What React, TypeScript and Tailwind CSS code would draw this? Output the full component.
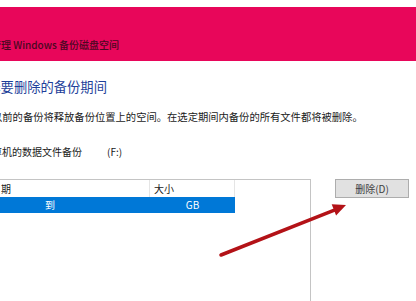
import React from 'react';

export default function App() {
  return (
    <div
      className="relative w-[416px] h-[301px] overflow-hidden bg-white text-[#1a1a1a]"
      style={{ fontFamily: '"Noto Sans CJK SC", "Noto Sans", sans-serif' }}
    >
      {/* Top strip */}
      <div className="h-[7px] bg-white" />

      {/* Pink title bar */}
      <div className="h-[54px] bg-[#e8065a] pt-[31px]">
        <p className="-ml-[9px] whitespace-nowrap text-[10px] font-medium leading-[14px] text-[#4a0822]">管理 Windows 备份磁盘空间</p>
      </div>

      {/* Heading */}
      <h2 className="mt-[17px] -ml-[26px] whitespace-nowrap text-[13.3px] leading-[18px] text-[#1e3f9a]">选择要删除的备份期间</h2>

      {/* Description */}
      <p className="mt-[14px] -ml-[8px] whitespace-nowrap text-[10.3px] leading-[14px]">
        以前的备份将释放备份位置上的空间。在选定期间内备份的所有文件都将被删除。
      </p>

      {/* Backup name */}
      <div className="mt-[21px] flex whitespace-nowrap text-[10px] leading-[14px]">
        <span className="-ml-[18px] w-[125px]">计算机的数据文件备份</span>
        <span>(F:)</span>
      </div>

      {/* Table and button */}
      <div className="mt-[20px] flex items-start">
        <div className="-ml-[10px] h-[130px] w-[321px] border border-[#c4c4c4] bg-white">
          <div className="flex h-[17px] text-[10px] leading-[17px]">
            <div className="w-[159px] border-r border-[#e5e5e5] whitespace-nowrap">日期</div>
            <div className="w-[85px] border-r border-[#e5e5e5] pl-[4px]">大小</div>
          </div>
          <div className="flex h-[16px] w-[244px] bg-[#0078d7] text-[10px] leading-[16px] text-white">
            <div className="w-[159px] pl-[54px]">到</div>
            <div className="w-[85px] text-center">GB</div>
          </div>
        </div>
        <button className="ml-[24px] h-[19px] w-[74px] border border-[#adadad] bg-[#e1e1e1] text-[10px] leading-[17px] text-[#404040]">
          删除(D)
        </button>
      </div>

      {/* Red annotation arrow */}
      <svg className="pointer-events-none absolute left-0 top-0" width="416" height="301" viewBox="0 0 416 301">
        <line x1="221" y1="255" x2="335" y2="209.8" stroke="#b31217" strokeWidth="3.5" strokeLinecap="round" />
        <polygon points="346,205 336.1,215.4 331.7,204.2" fill="#b31217" />
      </svg>
    </div>
  );
}
